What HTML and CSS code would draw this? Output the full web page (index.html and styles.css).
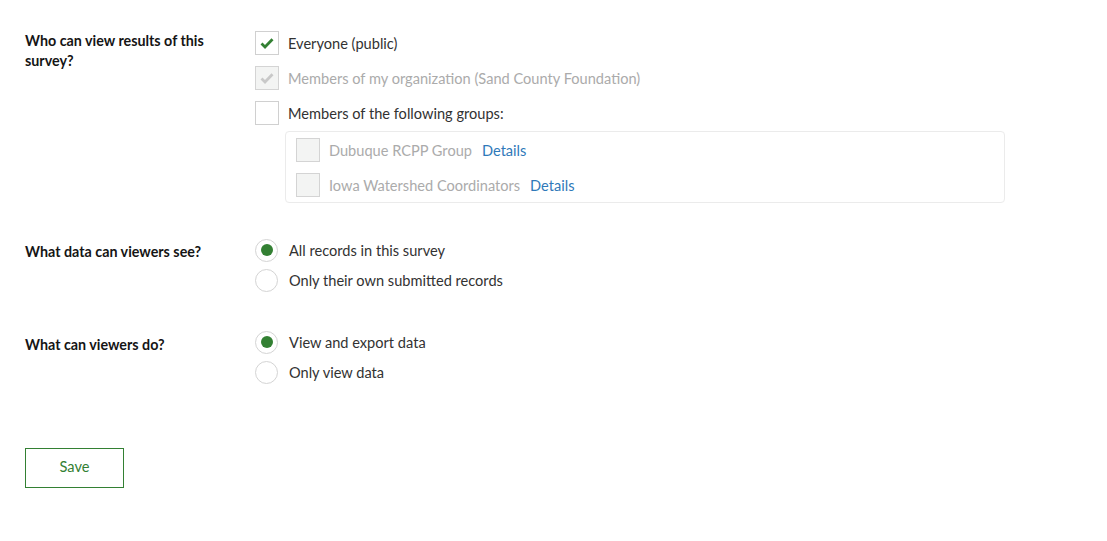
FILE: index.html
```html
<!DOCTYPE html>
<html lang="en">
<head>
<meta charset="utf-8">
<title>Survey sharing</title>
<link rel="stylesheet" href="styles.css">
</head>
<body>
<main class="page">
  <section class="setting setting-who">
    <div class="setting-label label-who">Who can view results of this survey?</div>
    <div class="options">
      <label class="option">
        <span class="checkbox checked"><svg viewBox="0 0 16 16" class="tick"><path d="M2.5 8.6 L6 12 L13.5 4.2" /></svg></span>
        <span class="option-text">Everyone (public)</span>
      </label>
      <label class="option disabled">
        <span class="checkbox checked disabled-box"><svg viewBox="0 0 16 16" class="tick"><path d="M2.5 8.6 L6 12 L13.5 4.2" /></svg></span>
        <span class="option-text">Members of my organization (Sand County Foundation)</span>
      </label>
      <label class="option">
        <span class="checkbox"></span>
        <span class="option-text">Members of the following groups:</span>
      </label>
      <div class="groups">
        <div class="option disabled">
          <span class="checkbox disabled-box"></span>
          <span class="option-text">Dubuque RCPP Group</span>
          <a class="details" href="#">Details</a>
        </div>
        <div class="option disabled">
          <span class="checkbox disabled-box"></span>
          <span class="option-text">Iowa Watershed Coordinators</span>
          <a class="details" href="#">Details</a>
        </div>
      </div>
    </div>
  </section>

  <section class="setting setting-data">
    <div class="setting-label label-radio">What data can viewers see?</div>
    <div class="options radios">
      <label class="option radio-option">
        <span class="radio selected"></span>
        <span class="option-text">All records in this survey</span>
      </label>
      <label class="option radio-option">
        <span class="radio"></span>
        <span class="option-text">Only their own submitted records</span>
      </label>
    </div>
  </section>

  <section class="setting setting-do">
    <div class="setting-label label-radio label-do">What can viewers do?</div>
    <div class="options radios">
      <label class="option radio-option">
        <span class="radio selected"></span>
        <span class="option-text">View and export data</span>
      </label>
      <label class="option radio-option">
        <span class="radio"></span>
        <span class="option-text">Only view data</span>
      </label>
    </div>
  </section>

  <div class="actions">
    <button class="btn-save" type="button">Save</button>
  </div>
</main>
</body>
</html>
```

FILE: styles.css
```css
* { box-sizing: border-box; }

html, body {
  margin: 0;
  padding: 0;
  background: #ffffff;
}

body {
  font-family: Lato, "Open Sans", "Liberation Sans", sans-serif;
  font-size: 14.6px;
  color: #323232;
}

.page {
  padding: 31px 0 0 25px;
  display: flex;
  flex-direction: column;
}

.setting {
  display: flex;
  align-items: flex-start;
}

.setting-who { margin-bottom: 35px; }
.setting-data { margin-bottom: 38px; }
.setting-do { margin-bottom: 64px; }

.setting-label {
  width: 200px;
  margin-right: 30px;
  font-weight: 700;
  font-size: 14.3px;
  color: #151515;
  line-height: 20px;
}

.label-who { margin-top: 0; }
.label-radio { padding-top: 4px; }
.label-do { padding-top: 5px; }

.options {
  display: flex;
  flex-direction: column;
  gap: 11px;
}

.options.radios { gap: 6px; }

.option {
  display: flex;
  align-items: center;
  height: 24px;
  cursor: pointer;
}

.option-text {
  line-height: 20px;
  padding-top: 1px;
}

.checkbox {
  width: 24px;
  height: 24px;
  border: 1px solid #d0d0d0;
  background: #ffffff;
  margin-right: 9px;
  display: flex;
  align-items: center;
  justify-content: center;
  flex: none;
}

.tick {
  width: 16px;
  height: 16px;
  fill: none;
  stroke: #338033;
  stroke-width: 2.8;
  stroke-linecap: butt;
  stroke-linejoin: miter;
}

.disabled-box {
  background: #f3f4f3;
  border-color: #d4d4d4;
}

.disabled-box .tick { stroke: #c8c8c8; }

.option.disabled .option-text { color: #ababab; }

.groups {
  margin-left: 30px;
  margin-top: -5px;
  width: 720px;
  border: 1px solid #ebebeb;
  border-radius: 4px;
  padding: 6px 10px 5px;
  display: flex;
  flex-direction: column;
  gap: 11px;
}

.details {
  color: #2f79b9;
  text-decoration: none;
  margin-left: 10px;
  line-height: 20px;
  padding-top: 1px;
}

.radio-option { height: 24px; }

.radio {
  width: 23px;
  height: 23px;
  border-radius: 50%;
  border: 1px solid #d4d4d4;
  margin-right: 11px;
  display: flex;
  align-items: center;
  justify-content: center;
  flex: none;
}

.radio.selected::after {
  content: "";
  width: 12px;
  height: 12px;
  border-radius: 50%;
  background: #338033;
}

.actions {
  display: flex;
}

.btn-save {
  width: 99px;
  height: 40px;
  border: 1px solid #338033;
  border-radius: 0;
  background: #ffffff;
  color: #338033;
  font-family: inherit;
  font-size: 14.6px;
  cursor: pointer;
  padding: 0 0 3px;
}
```
